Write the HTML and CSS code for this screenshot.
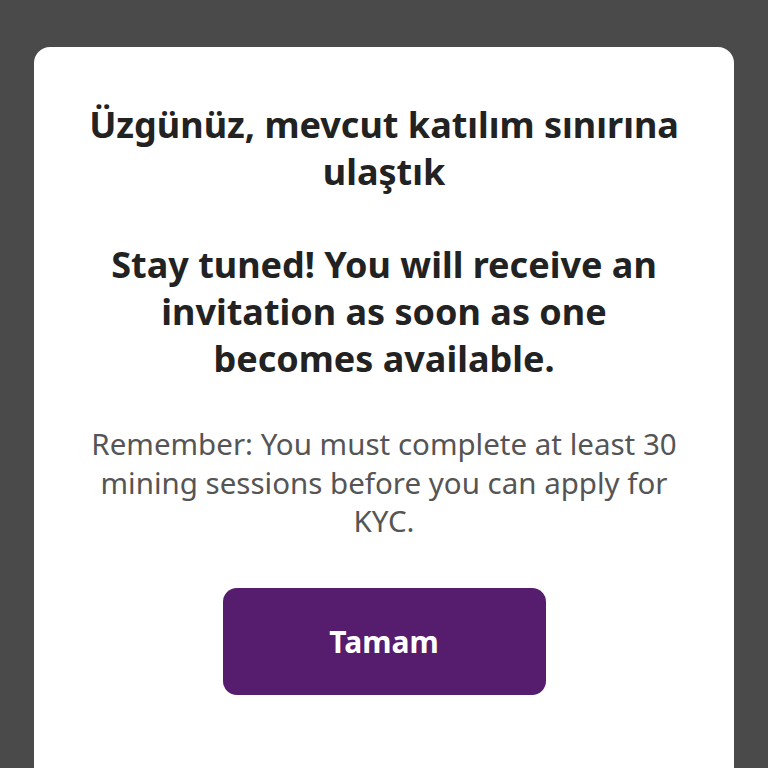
FILE: index.html
```html
<!DOCTYPE html>
<html lang="tr">
<head>
  <meta charset="UTF-8">
  <meta name="viewport" content="width=device-width, initial-scale=1.0">
  <title>Katılım sınırı</title>
  <link rel="stylesheet" href="styles.css">
</head>
<body>
  <div class="overlay">
    <div class="dialog">
      <h1 class="dialog-title">Üzgünüz, mevcut katılım sınırına ulaştık</h1>
      <p class="dialog-subtitle">Stay tuned! You will receive an invitation as soon as one becomes available.</p>
      <p class="dialog-note">Remember: You must complete at least 30 mining sessions before you can apply for KYC.</p>
      <button class="dialog-btn">Tamam</button>
    </div>
  </div>
</body>
</html>
```

FILE: styles.css
```css
html, body {
  margin: 0;
  padding: 0;
  height: 100%;
}
body {
  font-family: 'Noto Sans', 'Open Sans', sans-serif;
  background-color: #4a4a4a;
  overflow: hidden;
}
.overlay {
  padding: 47px 34px 0;
}
.dialog {
  background: #fff;
  border-radius: 16px;
  min-height: 760px;
  padding: 54px 48px 0;
  display: flex;
  flex-direction: column;
  align-items: center;
  text-align: center;
}
.dialog-title {
  margin: 0;
  font-size: 36px;
  line-height: 47px;
  font-weight: 700;
  color: #222;
}
.dialog-subtitle {
  max-width: 575px;
  margin: 46px 0 0;
  font-size: 36px;
  line-height: 47px;
  font-weight: 700;
  color: #222;
}
.dialog-note {
  margin: 43px 0 0;
  font-size: 29.5px;
  line-height: 38.5px;
  color: #555;
}
.dialog-btn {
  margin-top: 47px;
  width: 323px;
  height: 107px;
  border: none;
  border-radius: 14px;
  background: #561c6e;
  color: #fff;
  font-family: inherit;
  font-size: 30px;
  font-weight: 700;
  cursor: pointer;
}
```
